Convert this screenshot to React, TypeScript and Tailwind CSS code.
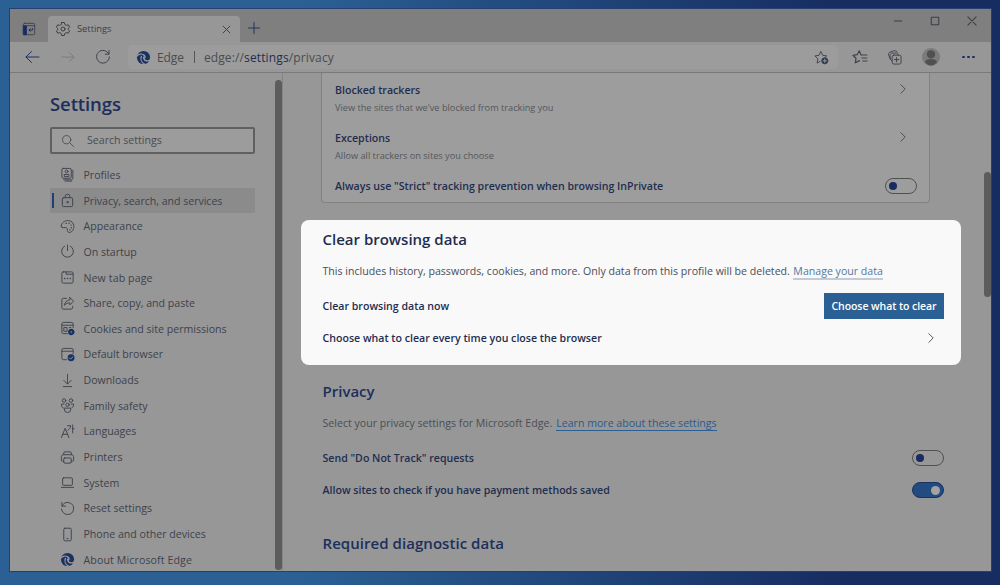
import type { ReactNode } from "react";

type IconProps = { children: ReactNode; className?: string };

function Icon({ children, className = "size-[15px]" }: IconProps) {
  return (
    <svg
      viewBox="0 0 16 16"
      fill="none"
      stroke="currentColor"
      strokeWidth="1"
      strokeLinecap="round"
      strokeLinejoin="round"
      className={`shrink-0 ${className}`}
    >
      {children}
    </svg>
  );
}

function EdgeLogo({ className }: { className: string }) {
  return (
    <svg viewBox="0 0 16 16" className={`shrink-0 ${className}`}>
      <circle cx="8" cy="8" r="7" fill="#1a3163" />
      <g fill="none" stroke="#979797" strokeLinecap="round">
        <path d="M.8 6.800C2.600 4.200 6.200 3.400 8.600 5.600" strokeWidth="1.100" />
        <path d="M5.800 6.800C4.400 9.600 5.600 13 9 15" strokeWidth="1.300" />
        <path d="M8 7.800c0 2.600 2.200 4 4.400 3.800 1-.1 1.900-.4 2.600-.9" strokeWidth="1.500" />
        <path d="M8.600 5.600c1.300 1.200 1.200 2.200.2 3" strokeWidth="1.600" />
      </g>
    </svg>
  );
}

function Chevron() {
  return (
    <Icon className="size-3.5 text-[#404349]">
      <path d="M5.500 3l5 5-5 5" />
    </Icon>
  );
}

function Toggle({ on = false }: { on?: boolean }) {
  return on ? (
    <span className="flex h-4 w-8 shrink-0 items-center justify-end rounded-full border border-[#1a3163] bg-[#224b80] px-[3px]">
      <span className="size-[9px] rounded-full bg-[#a3a3a3]" />
    </span>
  ) : (
    <span className="flex h-4 w-8 shrink-0 items-center rounded-full border border-[#505050] px-[3px]">
      <span className="size-2 rounded-full bg-[#172c61]" />
    </span>
  );
}

function Label({ children }: { children: ReactNode }) {
  return <span className="pt-px font-semibold whitespace-nowrap">{children}</span>;
}

const navItems: { label: string; track: string; icon: ReactNode }[] = [
  {
    label: "Profiles",
    track: "",
    icon: (
      <Icon>
        <rect x="2" y="1.500" width="10" height="10.500" rx="1.500" />
        <circle cx="7" cy="4.800" r="1.500" />
        <path d="M4.500 9.800V8h5v1.800zM13.700 3.500v8.500c0 1-.7 1.700-1.700 1.700H4" />
        <path d="M5.500 15h7" />
      </Icon>
    ),
  },
  {
    label: "Privacy, search, and services",
    track: "tracking-[-0.030px]",
    icon: (
      <Icon>
        <rect x="2.500" y="5" width="11" height="9.500" rx="1.200" />
        <path d="M5.500 5V3.800a2.500 2.500 0 015 0V5" />
        <circle cx="8" cy="9.700" r=".7" fill="currentColor" />
      </Icon>
    ),
  },
  {
    label: "Appearance",
    track: "",
    icon: (
      <Icon>
        <path d="M2.200 9C.9 8.500 1 6.700 2 5.200 3.800 2.300 7.300.9 10.500 2c3.700 1.200 5 5 3.900 8.500-1 3.300-4.200 4.700-5.900 3.400-1.200-1-.3-2.500-.9-3.800C6.800 8.300 4.500 10 2.200 9z" />
        <path d="M6.500 4.500h.1M9.500 4.500h.1M11.800 6.500h.1M12 9.300h.1M10.500 11.600h.1" strokeWidth="1.500" />
      </Icon>
    ),
  },
  {
    label: "On startup",
    track: "",
    icon: (
      <Icon>
        <path d="M8 1v6M5 2.200a6.300 6.300 0 106 0" />
      </Icon>
    ),
  },
  {
    label: "New tab page",
    track: "tracking-[0.100px]",
    icon: (
      <Icon>
        <rect x="2" y="2" width="12" height="12" rx="1.500" />
        <path d="M6.500 2v2.500H14" />
        <path d="M5 9h.1M8 9h.1M11 9h.1" strokeWidth="1.600" />
      </Icon>
    ),
  },
  {
    label: "Share, copy, and paste",
    track: "",
    icon: (
      <Icon>
        <path d="M7 2.500H3.500C2.600 2.500 2 3.100 2 4v8.500c0 .9.600 1.500 1.500 1.500H12c.9 0 1.500-.6 1.500-1.500V11" />
        <path d="M10.500 1.500l4 4-4 4V7.300C8 7.300 6.200 8 4.800 10c.3-3.200 2.300-5.700 5.700-6z" />
      </Icon>
    ),
  },
  {
    label: "Cookies and site permissions",
    track: "",
    icon: (
      <Icon>
        <path d="M8 13.500H3.500c-.9 0-1.500-.6-1.500-1.500V3c0-.9.600-1.500 1.500-1.500h9c.9 0 1.500.6 1.500 1.500v4M2 4.500h12M4.500 7h3v4h-3zM10 7h1.500" />
        <circle cx="12" cy="11.700" r="2.600" fill="#1a3163" stroke="#1a3163" strokeWidth="1.800" strokeDasharray="1.400 1.200" />
        <circle cx="12" cy="11.700" r=".8" fill="#979797" stroke="none" />
      </Icon>
    ),
  },
  {
    label: "Default browser",
    track: "",
    icon: (
      <Icon>
        <path d="M7 13.500H3.500c-.9 0-1.500-.6-1.500-1.500V3c0-.9.600-1.500 1.500-1.500h9c.9 0 1.500.6 1.500 1.500v4M2 4.500h12" />
        <circle cx="11.800" cy="11.500" r="3.700" fill="#1a3163" stroke="none" />
        <path d="M10 11.600l1.300 1.300 2.400-2.500" stroke="#979797" />
      </Icon>
    ),
  },
  {
    label: "Downloads",
    track: "",
    icon: (
      <Icon>
        <path d="M8 1.500v10M4 7.800l4 4 4-4M3.500 14.500h9" />
      </Icon>
    ),
  },
  {
    label: "Family safety",
    track: "",
    icon: (
      <Icon>
        <circle cx="4.300" cy="2.700" r="1.900" />
        <circle cx="11.700" cy="2.700" r="1.900" />
        <circle cx="8" cy="7.300" r="1.800" />
        <path d="M4.500 10.800h7v1.200a3.500 3.500 0 01-7 0zM4.200 6.500H1.500v1.200c0 1.200.7 2.200 1.800 2.600M11.800 6.500h2.700v1.200c0 1.200-.7 2.200-1.800 2.600" />
      </Icon>
    ),
  },
  {
    label: "Languages",
    track: "",
    icon: (
      <Icon>
        <path d="M1.500 14.500L5.500 4.500l4 10M3 11h5M8 1.800h3.500c-.2 2-1.200 3.600-3 4.700M13.500 1v8.500M13.500 5h1.500" />
      </Icon>
    ),
  },
  {
    label: "Printers",
    track: "",
    icon: (
      <Icon>
        <path d="M4 5V3c0-.6.400-1 1-1h6c.6 0 1 .4 1 1v2M4 12H2.500c-.6 0-1-.4-1-1V7c0-1.100.9-2 2-2h9c1.100 0 2 .9 2 2v4c0 .6-.4 1-1 1H12" />
        <rect x="4" y="8.500" width="8" height="5.500" rx="1" />
      </Icon>
    ),
  },
  {
    label: "System",
    track: "",
    icon: (
      <Icon>
        <rect x="2.800" y="3" width="10.400" height="8" rx="1" />
        <path d="M1.500 13.200h13" />
      </Icon>
    ),
  },
  {
    label: "Reset settings",
    track: "",
    icon: (
      <Icon>
        <path d="M2 1.500v4h4M2.300 5.200A6.400 6.400 0 118 14.400a6.400 6.400 0 01-6.400-5.900" />
      </Icon>
    ),
  },
  {
    label: "Phone and other devices",
    track: "",
    icon: (
      <Icon>
        <rect x="4" y="1.300" width="8" height="13.400" rx="1.200" />
        <path d="M7.300 12.300h1.400" />
      </Icon>
    ),
  },
  { label: "About Microsoft Edge", track: "tracking-[0.120px]", icon: <EdgeLogo className="size-[15px]" /> },
];

function TitleBar() {
  return (
    <div className="flex h-[33px] shrink-0 bg-[#7f7f7f] text-[#3c3f46]">
      <div className="flex w-[38px] items-center justify-center pt-1.5">
        <Icon className="size-3.5">
          <rect x="1.500" y="1.500" width="13" height="13" rx="1.500" />
          <path d="M1.500 4.200h13" />
          <path d="M2 4.500h3v10H2z" fill="#172c61" stroke="#172c61" />
          <path d="M12 7.500v1.700H8m1.500-1.500L8 9.200l1.500 1.500" stroke="#172c61" />
        </Icon>
      </div>
      <div className="mt-[7px] flex h-[26px] w-48 items-center rounded-t bg-[#979797] pr-[8px] pl-[7px]">
        <Icon className="size-4">
          <path d="M6.700 1.500h2.600l.5 2 1.500.9 2-.6 1.300 2.300L13.100 7.500v1l1.500 1.400-1.300 2.300-2-.6-1.500.9-.5 2H6.700l-.5-2-1.500-.9-2 .6-1.300-2.300 1.500-1.400v-1L1.400 6.100l1.300-2.300 2 .6 1.500-.9z" />
          <circle cx="8" cy="8" r="2" />
        </Icon>
        <span className="ml-[6px] flex-1 text-[9.300px]">Settings</span>
        <Icon className="size-[11px]">
          <path d="M3 3l10 10M13 3L3 13" strokeWidth="1.400" />
        </Icon>
      </div>
      <div className="flex items-center pt-1 pl-[6px]">
        <Icon className="size-4 text-[#26345a]">
          <path d="M8 2.500v11M2.500 8h11" />
        </Icon>
      </div>
      <div className="ml-auto flex h-[24px] items-center gap-[25px] pr-[13px]">
        <Icon className="size-3">
          <path d="M3 8h10" strokeWidth="1.400" />
        </Icon>
        <Icon className="size-3">
          <rect x="3" y="3" width="10" height="10" rx=".5" strokeWidth="1.400" />
        </Icon>
        <Icon className="size-3">
          <path d="M2.500 2.500l11 11M13.500 2.500l-11 11" strokeWidth="1.400" />
        </Icon>
      </div>
    </div>
  );
}

function Toolbar() {
  return (
    <div className="flex h-[31px] shrink-0 items-center border-b border-[#7a7a7a] text-[#3f4249]">
      <Icon className="ml-[14px] size-4 text-[#1d3060]">
        <path d="M15 8H2M7.500 2.500L2 8l5.500 5.500" />
      </Icon>
      <Icon className="ml-[20px] size-4 text-[#7c7c7c]">
        <path d="M2 8h12M9.500 3.500L14 8l-4.500 4.500" />
      </Icon>
      <Icon className="ml-[19px] size-4">
        <path d="M13.800 5A6.400 6.400 0 1014.400 8M14 1.500v3.700h-3.700" />
      </Icon>
      <div className="ml-[17px] flex h-6 w-[710px] items-center rounded bg-[#9c9c9c] pl-[8px]">
        <EdgeLogo className="size-[15px]" />
        <span className="ml-[6px] pt-px text-[12px] tracking-[-0.1px] text-[#4a4b4f]">Edge</span>
        <span className="ml-[10px] h-3 w-px bg-[#555]" />
        <span className="ml-[9px] pt-px text-[12px] tracking-[0.13px] text-[#4a4b4f]">
          edge://<span className="text-[#1f2d50]">settings</span>/privacy
        </span>
        <Icon className="mr-[9px] ml-auto size-[15px]">
          <path d="M6.500 12.200L3.300 14l.8-4.500L1 6.300l4.300-.6L7.300 1.500l2 4.200 4.300.6-1.500 1.500" />
          <circle cx="11.500" cy="11.500" r="3.300" fill="#26365c" />
          <path d="M11.500 9.700v3.600M9.700 11.500h3.600" stroke="#9c9c9c" />
        </Icon>
      </div>
      <Icon className="ml-[14px] size-4">
        <path d="M9 5.700L7.200 1.800 5.200 5.700l-4.300.6 3.100 3L3.300 13.800l4.200-2.200" strokeWidth="1.200" />
        <path d="M9.200 6H15M9.800 9H15M10.800 12H15" />
      </Icon>
      <Icon className="ml-[19px] size-[15px]">
        <path d="M3.500 9.500L1.700 5.300C1.200 4 1.800 2.900 3 2.400L7 1c1.200-.4 3.200-.2 4.200 1.300" />
        <rect x="5.500" y="5.500" width="9.500" height="9.500" rx="1.800" />
        <path d="M5.500 11.500C4 11 3.300 10 3.300 8.800V5.500c0-1.200 1-2.200 2.200-2.200h4.300c1.200 0 2 .8 2.300 2.200" />
        <path d="M10.200 7.900v4.700M7.900 10.200h4.700" />
      </Icon>
      <svg viewBox="0 0 18 18" className="ml-[20px] size-[18px]">
        <circle cx="9" cy="9" r="9" fill="#7b7b7b" />
        <circle cx="9" cy="6.300" r="4.100" fill="#505050" />
        <path d="M3 14.300c.4-2.400 2.400-3.300 6-3.300s5.600.9 6 3.300A8.500 8.500 0 019 17.500a8.500 8.500 0 01-6-3.200z" fill="#505050" />
      </svg>
      <div className="ml-[22px] flex gap-[2.500px]">
        <span className="size-[2.500px] rounded-full bg-[#1d3060]" />
        <span className="size-[2.500px] rounded-full bg-[#1d3060]" />
        <span className="size-[2.500px] rounded-full bg-[#1d3060]" />
      </div>
    </div>
  );
}

function Sidebar() {
  return (
    <aside className="flex w-[273px] shrink-0 border-r border-[#858585]">
      <div className="w-[265px] shrink-0 pl-10">
        <h1 className="mt-[18px] flex h-[26px] items-center text-[18.500px] font-semibold tracking-[-0.1px] text-[#1c2f5c]">
          Settings
        </h1>
        <div className="mt-[10px] flex h-[27px] w-[205px] items-center rounded-[2px] border-2 border-[#606060] bg-[#9c9c9c] pl-[9px] text-[#4a4c50]">
          <Icon className="size-3.5">
            <circle cx="6.500" cy="6.500" r="4.700" />
            <path d="M10 10l4.500 4.500" />
          </Icon>
          <span className="ml-[12px] pt-px text-[10.600px]">Search settings</span>
        </div>
        <nav className="mt-[8px] flex flex-col">
          {navItems.map((item, i) => (
            <div
              key={item.label}
              className={`flex h-[25.660px] w-[205px] items-center text-[#3e424b] ${i === 1 ? "bg-[#8b8b8b]" : ""}`}
            >
              <span className={`ml-[2px] h-[15px] w-[2px] ${i === 1 ? "bg-[#1d4079]" : ""}`} />
              <span className="ml-[6px] flex">{item.icon}</span>
              <span className={`ml-[8.500px] pt-[2px] text-[10.600px] whitespace-nowrap ${item.track}`}>
                {item.label}
              </span>
            </div>
          ))}
        </nav>
      </div>
      <div className="mt-[7px] mb-px w-[7px] rounded-full bg-[#5c5c5c]" />
    </aside>
  );
}

function Content() {
  return (
    <main className="flex flex-1 justify-between text-[10.600px] text-[#1f2d50]">
      <div className="w-[678px] pl-[18px]">
        <section className="mx-5 h-[130px] w-[609px] rounded-b border border-t-0 border-[#828282] bg-[#9d9d9d] pt-[9px] pl-[13px]">
          <div className="flex justify-between pr-[19px]">
            <div>
              <div className="flex h-4 items-center">
                <Label>Blocked trackers</Label>
              </div>
              <div className="flex h-[20px] items-center text-[9.200px] text-[#55575b]">
                View the sites that we've blocked from tracking you
              </div>
            </div>
            <Chevron />
          </div>
          <div className="mt-[12px] flex justify-between pr-[19px]">
            <div>
              <div className="flex h-4 items-center">
                <Label>Exceptions</Label>
              </div>
              <div className="flex h-[20px] items-center text-[9.200px] text-[#55575b]">
                Allow all trackers on sites you choose
              </div>
            </div>
            <Chevron />
          </div>
          <div className="mt-[12px] flex h-4 items-center justify-between pr-[12px]">
            <Label>Always use "Strict" tracking prevention when browsing InPrivate</Label>
            <Toggle />
          </div>
        </section>

        <section className="mt-[17px] h-[145px] w-[660px] rounded-lg bg-[#f9f9f9] pr-[17px] pl-[21.500px]">
          <h2 className="flex h-[38px] items-center text-[15px] font-semibold">Clear browsing data</h2>
          <p className="mt-px flex h-6 items-center pt-[2px] text-[#4b4e56]">
            This includes history, passwords, cookies, and more. Only data from this profile will be deleted.
            <a className="ml-[3.500px] border-b-2 border-[#c3cad3] leading-[13px] text-[#55779f]">Manage your data</a>
          </p>
          <div className="mt-[10px] flex h-[26px] items-center justify-between">
            <Label>Clear browsing data now</Label>
            <button className="h-[26px] w-[120px] bg-[#2b6094] pt-px text-[10.500px] font-semibold tracking-[-0.06px] text-white">
              Choose what to clear
            </button>
          </div>
          <div className="mt-[7px] flex h-6 items-center justify-between pr-[6px]">
            <Label>Choose what to clear every time you close the browser</Label>
            <Chevron />
          </div>
        </section>

        <section className="mt-[13px] w-[643px] pl-[21.500px]">
          <h2 className="flex h-[26px] items-center text-[15px] font-semibold text-[#1c2f5c]">Privacy</h2>
          <p className="mt-[7px] flex h-6 items-center pt-[2px] text-[#4b4e54]">
            Select your privacy settings for Microsoft Edge.
            <a className="ml-1 border-b border-[#2b6094] leading-[13px] text-[#2b5a8c]">Learn more about these settings</a>
          </p>
          <div className="mt-[11px] flex h-6 items-center justify-between">
            <Label>Send "Do Not Track" requests</Label>
            <Toggle />
          </div>
          <div className="mt-[8px] flex h-6 items-center justify-between">
            <Label>Allow sites to check if you have payment methods saved</Label>
            <Toggle on />
          </div>
          <h2 className="mt-[28px] flex h-[26px] items-center text-[15px] font-semibold tracking-[0.05px] text-[#1c2f5c]">
            Required diagnostic data
          </h2>
        </section>
      </div>
      <div className="mt-[99px] h-[125px] w-[7px] rounded-full bg-[#5c5c5c]" />
    </main>
  );
}

export default function App() {
  return (
    <div className="h-[585px] w-[1000px] overflow-hidden bg-linear-to-r from-[#2b6094] from-30% to-[#172c61] to-85% pt-[9px] pl-[10px] font-['Open_Sans','Noto_Sans',sans-serif]">
      <div className="flex h-[562px] w-[981px] flex-col overflow-hidden bg-[#979797] shadow-[0_0_0_1px_#23406f]">
        <TitleBar />
        <Toolbar />
        <div className="flex h-[498px]">
          <Sidebar />
          <Content />
        </div>
      </div>
    </div>
  );
}
